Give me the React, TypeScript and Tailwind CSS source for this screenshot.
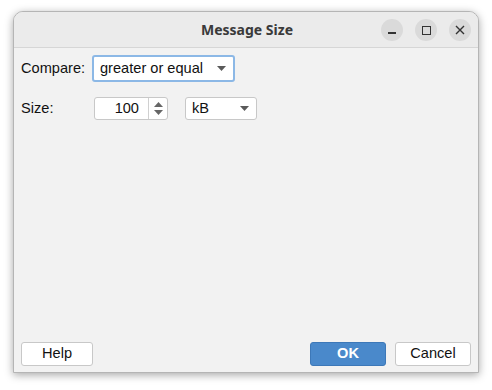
import React from "react";

const Arrow = () => (
  <svg width="9" height="5" viewBox="0 0 9 5" className="block">
    <path d="M0 0 L9 0 L4.5 5 Z" fill="#5a5a5a" />
  </svg>
);

export default function App() {
  return (
    <div className="w-[492px] h-[390px] bg-white overflow-hidden pt-[11px] pl-[13px]" style={{ fontFamily: '"Liberation Sans", Arial, sans-serif' }}>
      <div className="w-[466px] h-[362px] flex flex-col bg-[#f2f2f2] border border-[#b5b5b5] rounded-t-[10px] shadow-[0_2px_8px_rgba(0,0,0,0.35)] overflow-hidden">
        {/* title bar */}
        <div className="h-[36px] shrink-0 bg-[#ebebeb] border-b border-[#d6d6d6] flex items-center relative">
          <div className="flex-1 text-center text-[14px] font-bold text-[#3a3a3a] pl-[2px]" style={{ fontFamily: '"Noto Sans", "Open Sans", sans-serif' }}>
            Message Size
          </div>
          <div className="absolute right-[7px] top-[7px] flex gap-[12px]">
            <div className="w-[22px] h-[22px] rounded-full bg-[#dadada] flex items-center justify-center">
              <div className="w-[8px] h-[1.5px] bg-[#333] mt-[6px]" />
            </div>
            <div className="w-[22px] h-[22px] rounded-full bg-[#dadada] flex items-center justify-center">
              <div className="w-[9px] h-[9px] border-[1.5px] border-[#333]" />
            </div>
            <div className="w-[22px] h-[22px] rounded-full bg-[#dadada] flex items-center justify-center">
              <svg width="10" height="10" viewBox="0 0 10 10">
                <path d="M1 1 L9 9 M9 1 L1 9" stroke="#333" strokeWidth="1.4" />
              </svg>
            </div>
          </div>
        </div>

        {/* body */}
        <div className="flex-1 flex flex-col px-[7px] text-[14.6px] text-[#111]">
          <div className="flex items-center mt-[7px] h-[27px]">
            <div className="w-[71px]">Compare:</div>
            <div className="w-[143px] h-[27px] rounded-[3px] border-2 border-[#8cb8e6] bg-white flex items-center pl-[6px] pr-[7px]">
              <span className="flex-1">greater or equal</span>
              <Arrow />
            </div>
          </div>
          <div className="flex items-center mt-[15px] h-[23px]">
            <div className="w-[73px]">Size:</div>
            <div className="w-[74px] h-[23px] rounded-[3px] border border-[#c8c8c8] bg-white flex">
              <div className="w-[53px] text-right pr-[9px] leading-[21px]">100</div>
              <div className="flex-1 border-l border-[#d0d0d0] flex flex-col items-center justify-center gap-[3px]">
                <svg width="9" height="5" viewBox="0 0 9 5"><path d="M0 5 L9 5 L4.5 0 Z" fill="#666" /></svg>
                <svg width="9" height="5" viewBox="0 0 9 5"><path d="M0 0 L9 0 L4.5 5 Z" fill="#666" /></svg>
              </div>
            </div>
            <div className="ml-[17px] w-[72px] h-[23px] rounded-[3px] border border-[#c8c8c8] bg-white flex items-center pl-[6px] pr-[7px]">
              <span className="flex-1">kB</span>
              <Arrow />
            </div>
          </div>

          <div className="flex-1" />

          <div className="flex items-center mb-[6px] h-[24px]">
            <div className="w-[72px] h-[24px] rounded-[3px] border border-[#c8c8c8] bg-white flex items-center justify-center">Help</div>
            <div className="flex-1" />
            <div className="w-[76px] h-[24px] rounded-[3px] border border-[#3d78b8] bg-[#4a89cb] text-white font-bold flex items-center justify-center">OK</div>
            <div className="ml-[9px] w-[76px] h-[24px] rounded-[3px] border border-[#c8c8c8] bg-white flex items-center justify-center">Cancel</div>
          </div>
        </div>
      </div>
    </div>
  );
}
